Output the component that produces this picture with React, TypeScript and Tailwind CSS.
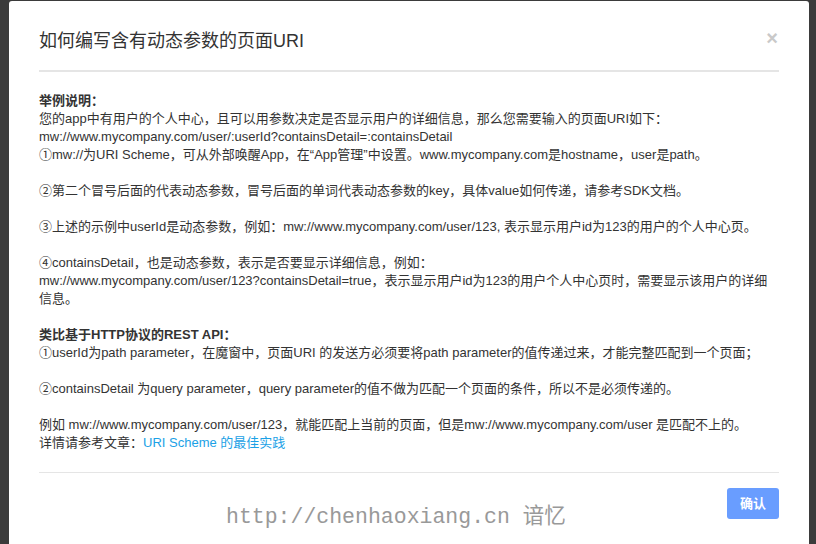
import React from 'react'

const lines: { text?: React.ReactNode; bold?: boolean }[] = [
  { text: '举例说明：', bold: true },
  { text: '您的app中有用户的个人中心，且可以用参数决定是否显示用户的详细信息，那么您需要输入的页面URI如下：' },
  { text: 'mw://www.mycompany.com/user/:userId?containsDetail=:containsDetail' },
  { text: '①mw://为URI Scheme，可从外部唤醒App，在“App管理”中设置。www.mycompany.com是hostname，user是path。' },
  {},
  { text: '②第二个冒号后面的代表动态参数，冒号后面的单词代表动态参数的key，具体value如何传递，请参考SDK文档。' },
  {},
  { text: '③上述的示例中userId是动态参数，例如：mw://www.mycompany.com/user/123, 表示显示用户id为123的用户的个人中心页。' },
  {},
  { text: '④containsDetail，也是动态参数，表示是否要显示详细信息，例如：' },
  { text: 'mw://www.mycompany.com/user/123?containsDetail=true，表示显示用户id为123的用户个人中心页时，需要显示该用户的详细' },
  { text: '信息。' },
  {},
  { text: '类比基于HTTP协议的REST API：', bold: true },
  { text: '①userId为path parameter，在魔窗中，页面URI 的发送方必须要将path parameter的值传递过来，才能完整匹配到一个页面；' },
  {},
  { text: '②containsDetail 为query parameter，query parameter的值不做为匹配一个页面的条件，所以不是必须传递的。' },
  {},
  { text: '例如 mw://www.mycompany.com/user/123，就能匹配上当前的页面，但是mw://www.mycompany.com/user 是匹配不上的。' },
  {
    text: (
      <>
        详情请参考文章：<a className="text-[#1ba1e6]">URI Scheme 的最佳实践</a>
      </>
    ),
  },
]

export default function App() {
  return (
    <div className="relative h-[544px] w-[816px] overflow-hidden bg-[#3b3b3b] pl-[9px] pt-[1px] font-['Liberation_Sans','Noto_Sans_CJK_SC',sans-serif]">
      <div className="h-[560px] w-[800px] rounded-t-[3px] bg-white px-[30px]">
        {/* header */}
        <div className="flex items-center justify-between pt-[28px] pb-[17px]">
          <h2 className="text-[18px] leading-[24px] text-[#333]">如何编写含有动态参数的页面URI</h2>
          <span className="mr-[1px] -mt-[6px] text-[20px] font-bold leading-none text-[#c9c9c9]">×</span>
        </div>
        <div className="h-[2px] bg-[#e5e5e5]" />

        {/* body */}
        <div className="pt-[20px] pb-[20px] text-[13px] leading-[18px] text-[#333]">
          {lines.map((l, i) => (
            <div key={i} className={`h-[18px] whitespace-nowrap ${l.bold ? 'font-bold' : ''}`}>
              {l.text}
            </div>
          ))}
        </div>

        {/* footer */}
        <div className="h-px bg-[#e5e5e5]" />
        <div className="flex justify-end pt-[15px]">
          <button className="h-[31px] w-[52px] rounded-[3px] bg-[#699dff] text-[13px] font-bold text-white">
            确认
          </button>
        </div>
      </div>

      {/* watermark */}
      <div className="pointer-events-none absolute left-[226px] top-[503px] whitespace-nowrap font-['Liberation_Mono','Noto_Sans_CJK_SC',monospace] text-[21.5px] leading-[28px] text-[#999]">
        http://chenhaoxiang.cn 谙忆
      </div>
    </div>
  )
}
